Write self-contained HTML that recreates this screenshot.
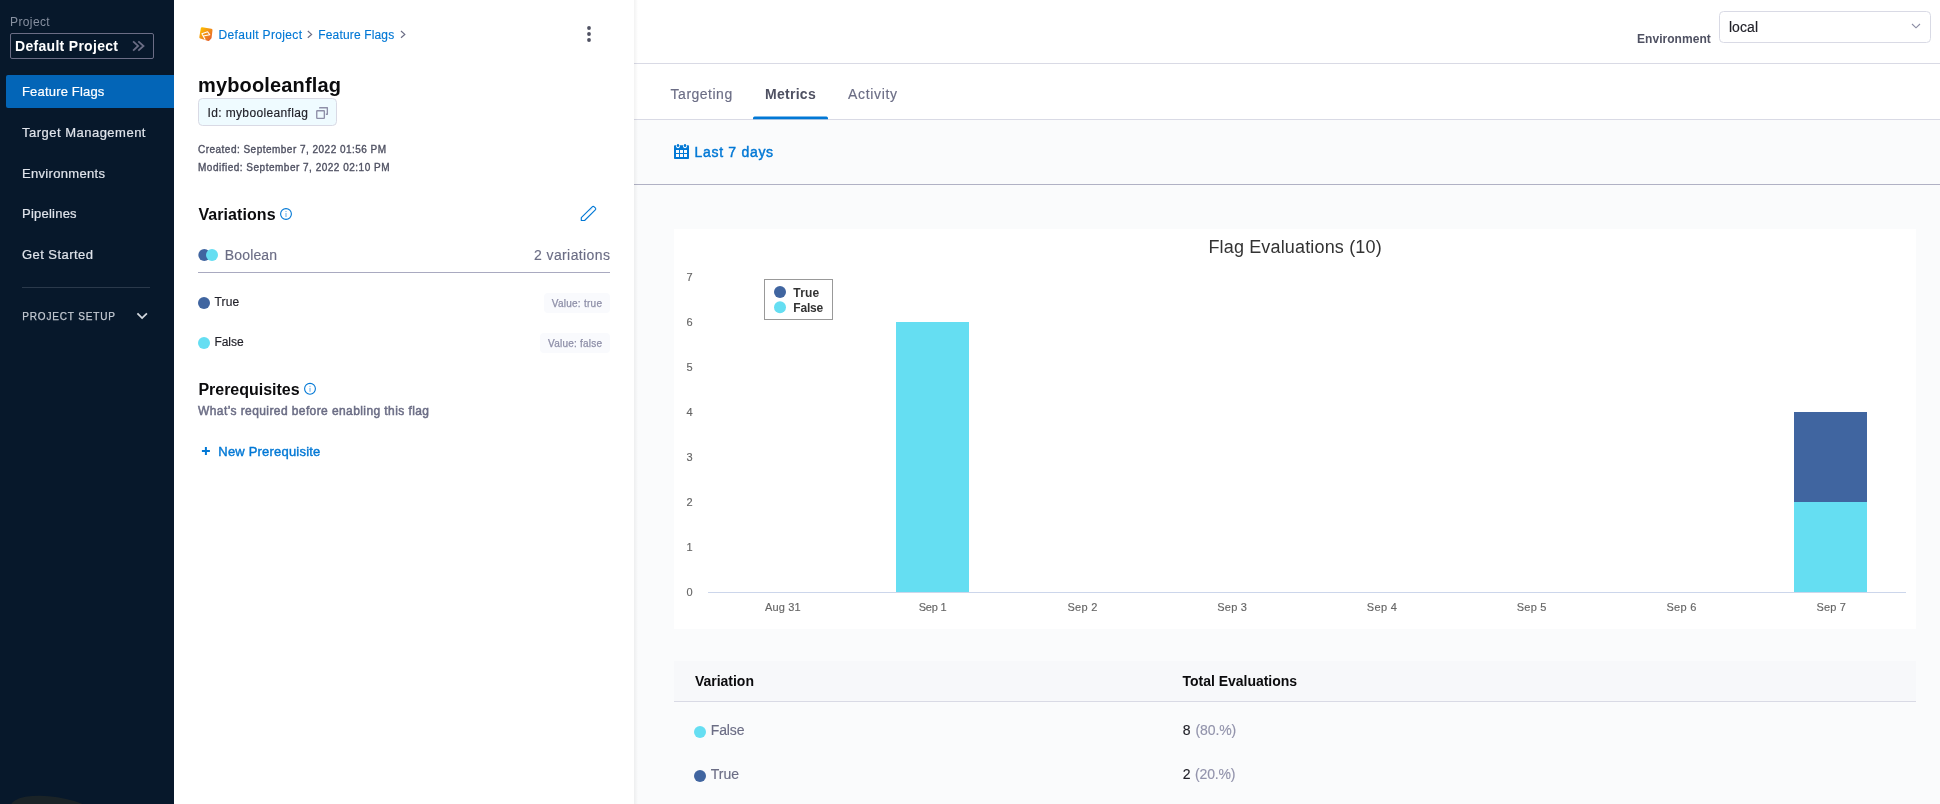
<!DOCTYPE html>
<html lang="en"><head><meta charset="utf-8"><title>mybooleanflag - Feature Flags</title>
<style>
*{box-sizing:border-box}
html,body{margin:0;padding:0}
body{width:1940px;height:804px;overflow:hidden;position:relative;background:#fafbfc;font-family:"Liberation Sans",sans-serif;}
.t{position:absolute;white-space:pre;margin:0}
.gl{position:absolute;left:0;top:0;width:1940px;height:804px;will-change:transform}
.abs{position:absolute}
#sidebar{left:0;top:0;width:174px;height:804px;background:#07182b;overflow:hidden}
#left{left:174px;top:0;width:460px;height:804px;background:#fff;}
#right{left:634px;top:0;width:1306px;height:804px;background:#fafbfc;overflow:hidden}
svg{position:absolute;overflow:visible}
</style></head>
<body>

<nav id="sidebar" class="abs">
  <div class="abs" style="left:10px;top:797px;width:90px;height:32px;border-radius:50%;background:#1a2327;transform:rotate(9deg)"></div>
  <div class="abs" style="left:10px;top:33px;width:144px;height:26px;border:1px solid #6b6d85;border-radius:2px"></div>
  <svg style="left:0;top:0" width="174" height="804"><path d="M133.1 41.4l5 4.55-5 4.65M138.3 41.4l5.2 4.55-5.2 4.65" fill="none" stroke="#6b6d85" stroke-width="1.8"/>
  <path d="M137.4 313.4l4.7 4.7 4.8-4.7" fill="none" stroke="#d3d8de" stroke-width="1.8"/></svg>
  <div class="abs" style="left:6px;top:75px;width:168px;height:33px;background:#0365b7;border-radius:2px 0 0 2px"></div>
  <div class="abs" style="left:22px;top:287px;width:128px;height:1px;background:#2a394b"></div>
  <div class="gl">
  <span class="t" style="left:10px;top:15px;font-size:12px;line-height:14px;color:#8790a0;letter-spacing:0.39px;">Project</span>
<span class="t" style="left:15px;top:38px;font-size:14px;line-height:17px;color:#ffffff;font-weight:700;letter-spacing:0.3px;">Default Project</span>
<span class="t" style="left:22px;top:84px;font-size:13px;line-height:16px;color:#ffffff;letter-spacing:0.18px;-webkit-text-stroke:0.2px #ffffff;">Feature Flags</span>
<span class="t" style="left:22px;top:125px;font-size:13px;line-height:16px;color:#dfe3ea;letter-spacing:0.49px;-webkit-text-stroke:0.2px #dfe3ea;">Target Management</span>
<span class="t" style="left:22px;top:166px;font-size:13px;line-height:16px;color:#dfe3ea;letter-spacing:0.32px;-webkit-text-stroke:0.2px #dfe3ea;">Environments</span>
<span class="t" style="left:22px;top:206px;font-size:13px;line-height:16px;color:#dfe3ea;letter-spacing:0.23px;-webkit-text-stroke:0.2px #dfe3ea;">Pipelines</span>
<span class="t" style="left:22px;top:247px;font-size:13px;line-height:16px;color:#dfe3ea;letter-spacing:0.45px;-webkit-text-stroke:0.2px #dfe3ea;">Get Started</span>
<span class="t" style="left:22.2px;top:311px;font-size:10px;line-height:12px;color:#c3c9d2;letter-spacing:0.84px;-webkit-text-stroke:0.25px #c3c9d2;">PROJECT SETUP</span>
  </div>
</nav>


<main id="right" class="abs">
  <div class="abs" style="left:0;top:0;width:1306px;height:64px;background:#fff;border-bottom:1px solid #d9dae5"></div>
  <div class="abs" style="left:0;top:64px;width:1306px;height:56px;background:#fff;border-bottom:1px solid #d9dae5"></div>
  <div class="abs" style="left:0;top:120px;width:1306px;height:65px;background:#fafbfc;border-bottom:1px solid #b0b1c4"></div>
  <div class="abs" style="left:0;top:0;width:4px;height:804px;background:linear-gradient(90deg,rgba(0,0,0,.05),rgba(0,0,0,0))"></div>
  <div class="abs" style="left:40px;top:229px;width:1242px;height:400px;background:#fff"></div>
  <div class="abs" style="left:40px;top:661px;width:1242px;height:41px;background:#f7f8fa;border-bottom:1px solid #d9dae5"></div>
</main>
<svg style="left:0;top:0" width="1940" height="804">
  <rect x="1719.5" y="11.5" width="211" height="31" rx="4" fill="#fff" stroke="#d9dae5"/>
  <path d="M1912 24l4 3.8 4-3.8" fill="none" stroke="#8b8ca3" stroke-width="1.1"/>
  <path d="M753 119.3v-1.1a1.6 1.6 0 0 1 1.6-1.6h71.8a1.6 1.6 0 0 1 1.6 1.6v1.1z" fill="#0278d5"/>
  <g><rect x="674" y="145.2" width="15" height="13.8" rx=".8" fill="#0278d5"/>
    <circle cx="678" cy="146.3" r="1.85" fill="#fafbfc"/><circle cx="685" cy="146.3" r="1.85" fill="#fafbfc"/>
    <rect x="677" y="143.9" width="2" height="3" rx=".7" fill="#0278d5"/><rect x="684" y="143.9" width="2" height="3" rx=".7" fill="#0278d5"/>
    <g fill="#fafbfc"><rect x="676" y="150" width="3" height="3"/><rect x="680" y="150" width="3" height="3"/><rect x="684" y="150" width="3" height="3"/><rect x="676" y="154" width="3" height="3"/><rect x="680" y="154" width="3" height="3"/><rect x="684" y="154" width="3" height="3"/></g></g>
  <rect x="708" y="592" width="1198" height="1" fill="#ccd6eb"/>
  <rect x="896" y="322" width="73" height="270" fill="#65def2"/><rect x="1794" y="412" width="73" height="90" fill="#4065a0"/><rect x="1794" y="502" width="73" height="90" fill="#65def2"/>
  <rect x="764.5" y="279.5" width="68" height="40" fill="#fff" stroke="#999"/>
  <circle cx="780" cy="292" r="6" fill="#4065a0"/><circle cx="780" cy="307.3" r="6" fill="#65def2"/>
  <circle cx="700" cy="732" r="6" fill="#65def2"/><circle cx="700" cy="775.9" r="6" fill="#4065a0"/>
</svg>
<div class="gl">
<span class="t" style="left:1637px;top:32px;font-size:12px;line-height:14px;color:#4f5162;font-weight:700;letter-spacing:0.04px;">Environment</span>
<span class="t" style="left:1728.9px;top:19px;font-size:14px;line-height:17px;color:#22222a;letter-spacing:0.08px;-webkit-text-stroke:0.15px #22222a;">local</span>
<span class="t" style="left:670.6px;top:86px;font-size:14px;line-height:17px;color:#6b6d85;letter-spacing:0.5px;-webkit-text-stroke:0.15px #6b6d85;">Targeting</span>
<span class="t" style="left:765px;top:86px;font-size:14px;line-height:17px;color:#4f5162;font-weight:700;letter-spacing:0.28px;">Metrics</span>
<span class="t" style="left:848.1px;top:86px;font-size:14px;line-height:17px;color:#6b6d85;letter-spacing:0.67px;-webkit-text-stroke:0.15px #6b6d85;">Activity</span>
<span class="t" style="left:694.5px;top:144px;font-size:14px;line-height:17px;color:#0278d5;letter-spacing:0.7px;-webkit-text-stroke:0.45px #0278d5;">Last 7 days</span>
<span class="t" style="left:1208.4px;top:236px;font-size:18px;line-height:22px;color:#333333;letter-spacing:0.16px;">Flag Evaluations (10)</span>
<span class="t" style="left:793.3px;top:286px;font-size:12px;line-height:14px;color:#333333;font-weight:700;letter-spacing:0.19px;">True</span>
<span class="t" style="left:793.3px;top:301px;font-size:12px;line-height:14px;color:#333333;font-weight:700;letter-spacing:-0.2px;">False</span>
<span class="t" style="left:686.4px;top:586px;font-size:11px;line-height:13px;color:#666666;-webkit-text-stroke:0.15px #666666;">0</span>
<span class="t" style="left:686.4px;top:541px;font-size:11px;line-height:13px;color:#666666;-webkit-text-stroke:0.15px #666666;">1</span>
<span class="t" style="left:686.4px;top:496px;font-size:11px;line-height:13px;color:#666666;-webkit-text-stroke:0.15px #666666;">2</span>
<span class="t" style="left:686.4px;top:451px;font-size:11px;line-height:13px;color:#666666;-webkit-text-stroke:0.15px #666666;">3</span>
<span class="t" style="left:686.4px;top:406px;font-size:11px;line-height:13px;color:#666666;-webkit-text-stroke:0.15px #666666;">4</span>
<span class="t" style="left:686.4px;top:361px;font-size:11px;line-height:13px;color:#666666;-webkit-text-stroke:0.15px #666666;">5</span>
<span class="t" style="left:686.4px;top:316px;font-size:11px;line-height:13px;color:#666666;-webkit-text-stroke:0.15px #666666;">6</span>
<span class="t" style="left:686.4px;top:271px;font-size:11px;line-height:13px;color:#666666;-webkit-text-stroke:0.15px #666666;">7</span>
<span class="t" style="left:765.1px;top:601px;font-size:11px;line-height:13px;color:#666666;letter-spacing:0.14px;-webkit-text-stroke:0.15px #666666;">Aug 31</span>
<span class="t" style="left:918.8px;top:601px;font-size:11px;line-height:13px;color:#666666;letter-spacing:-0.26px;-webkit-text-stroke:0.15px #666666;">Sep 1</span>
<span class="t" style="left:1067.5px;top:601px;font-size:11px;line-height:13px;color:#666666;letter-spacing:0.26px;-webkit-text-stroke:0.15px #666666;">Sep 2</span>
<span class="t" style="left:1217.2px;top:601px;font-size:11px;line-height:13px;color:#666666;letter-spacing:0.26px;-webkit-text-stroke:0.15px #666666;">Sep 3</span>
<span class="t" style="left:1366.8px;top:601px;font-size:11px;line-height:13px;color:#666666;letter-spacing:0.36px;-webkit-text-stroke:0.15px #666666;">Sep 4</span>
<span class="t" style="left:1516.7px;top:601px;font-size:11px;line-height:13px;color:#666666;letter-spacing:0.26px;-webkit-text-stroke:0.15px #666666;">Sep 5</span>
<span class="t" style="left:1666.4px;top:601px;font-size:11px;line-height:13px;color:#666666;letter-spacing:0.31px;-webkit-text-stroke:0.15px #666666;">Sep 6</span>
<span class="t" style="left:1816.4px;top:601px;font-size:11px;line-height:13px;color:#666666;letter-spacing:0.16px;-webkit-text-stroke:0.15px #666666;">Sep 7</span>
<span class="t" style="left:694.9px;top:673px;font-size:14px;line-height:17px;color:#0b0b0d;font-weight:700;letter-spacing:-0.01px;">Variation</span>
<span class="t" style="left:1182.5px;top:673px;font-size:14px;line-height:17px;color:#0b0b0d;font-weight:700;letter-spacing:-0.02px;">Total Evaluations</span>
<span class="t" style="left:710.8px;top:722px;font-size:14px;line-height:17px;color:#6b6d85;letter-spacing:-0.13px;-webkit-text-stroke:0.15px #6b6d85;">False</span>
<span class="t" style="left:1182.7px;top:722px;font-size:14px;line-height:17px;color:#22222a;-webkit-text-stroke:0.15px #22222a;">8</span>
<span class="t" style="left:1195.4px;top:722px;font-size:14px;line-height:17px;color:#9293ab;letter-spacing:-0.07px;-webkit-text-stroke:0.15px #9293ab;">(80.%)</span>
<span class="t" style="left:710.8px;top:766px;font-size:14px;line-height:17px;color:#6b6d85;letter-spacing:0.01px;-webkit-text-stroke:0.15px #6b6d85;">True</span>
<span class="t" style="left:1182.7px;top:766px;font-size:14px;line-height:17px;color:#22222a;-webkit-text-stroke:0.15px #22222a;">2</span>
<span class="t" style="left:1195px;top:766px;font-size:14px;line-height:17px;color:#9293ab;letter-spacing:-0.15px;-webkit-text-stroke:0.15px #9293ab;">(20.%)</span>
</div>


<section id="left" class="abs"></section>
<svg style="left:0;top:0" width="700" height="804">
  <defs><linearGradient id="og" x1="0" y1="0" x2="1" y2="1"><stop offset="0" stop-color="#fdbd00"/><stop offset="1" stop-color="#e5602f"/></linearGradient></defs>
  <g transform="translate(199,27)">
    <path d="M3.1 1.5L12.2 3L11.3 10.7L9.5 12.7L6.6 11.7L1.6 10.3Z" fill="url(#og)" stroke="url(#og)" stroke-width="2.6" stroke-linejoin="round"/>
    <path d="M6 12.3L2.9 6.7L8.6 4.7L10.8 7.8L4.2 9" fill="none" stroke="#fff" stroke-width="1.1" stroke-linejoin="round" stroke-linecap="round"/>
  </g>
  <path d="M307.8 31l3.8 3.4-3.8 3.4M401 31l3.8 3.4-3.8 3.4" fill="none" stroke="#6b6d85" stroke-width="1.2"/>
  <g fill="#4f5162"><circle cx="589" cy="28" r="1.9"/><circle cx="589" cy="34" r="1.9"/><circle cx="589" cy="40" r="1.9"/></g>
  <rect x="198.5" y="98.5" width="138" height="27" rx="4" fill="#effbff" stroke="#d9dae5"/>
  <g fill="none" stroke="#8e8fa8" stroke-width="1.35"><rect x="316.75" y="110.75" width="7.6" height="7.6" rx=".5"/><path d="M319.75 108.6v-.9h7.6v6.5h-1.5" stroke-linejoin="round"/></g>
  <g fill="none" stroke="#0278d5"><circle cx="286" cy="214" r="5.4" stroke-width="1.1"/><circle cx="310" cy="388.8" r="5.4" stroke-width="1.1"/></g>
  <g fill="#6db1ea"><rect x="285.45" y="213" width="1.1" height="4"/><rect x="285.45" y="211" width="1.1" height="1.1"/><rect x="309.45" y="387.8" width="1.1" height="4"/><rect x="309.45" y="385.8" width="1.1" height="1.1"/></g>
  <path d="M581.3 220.5v-2.9L592.2 206.8q1-1 2 0l1.1 1.1q1 1 0 2L584.6 220.5Z" fill="none" stroke="#0278d5" stroke-width="1.15" stroke-linejoin="round"/>
  <path d="M589.4 211.2l3.2-3.2" fill="none" stroke="#0278d5" stroke-opacity=".22" stroke-width="1"/>
  <circle cx="204.3" cy="255" r="6" fill="#4065a0"/><circle cx="212" cy="255" r="6" fill="#65def2"/>
  <rect x="198" y="272" width="412" height="1" fill="#a9aac0"/>
  <circle cx="204" cy="303" r="6" fill="#4065a0"/><circle cx="204" cy="343" r="6" fill="#65def2"/>
  <rect x="544" y="293" width="66" height="20" rx="4" fill="#f9fafd"/>
  <rect x="540" y="333" width="70" height="20" rx="4" fill="#f9fafd"/>
  <path d="M205.9 447v8M201.9 451h8" stroke="#0278d5" stroke-width="2"/>
</svg>
<div class="gl">
<span class="t" style="left:218.5px;top:28px;font-size:12px;line-height:14px;color:#0278d5;letter-spacing:0.34px;-webkit-text-stroke:0.15px #0278d5;">Default Project</span>
<span class="t" style="left:318.3px;top:28px;font-size:12px;line-height:14px;color:#0278d5;letter-spacing:0.15px;-webkit-text-stroke:0.15px #0278d5;">Feature Flags</span>
<span class="t" style="left:198px;top:73px;font-size:20px;line-height:24px;color:#0b0b0d;font-weight:700;letter-spacing:0.15px;">mybooleanflag</span>
<span class="t" style="left:207.6px;top:106px;font-size:12px;line-height:14px;color:#22222a;letter-spacing:0.35px;-webkit-text-stroke:0.15px #22222a;">Id: mybooleanflag</span>
<span class="t" style="left:198px;top:144px;font-size:10px;line-height:12px;color:#4f5162;letter-spacing:0.48px;-webkit-text-stroke:0.35px #4f5162;">Created: September 7, 2022 01:56 PM</span>
<span class="t" style="left:198px;top:162px;font-size:10px;line-height:12px;color:#4f5162;letter-spacing:0.5px;-webkit-text-stroke:0.35px #4f5162;">Modified: September 7, 2022 02:10 PM</span>
<span class="t" style="left:198.4px;top:205px;font-size:16px;line-height:19px;color:#0b0b0d;font-weight:700;letter-spacing:0.08px;">Variations</span>
<span class="t" style="left:224.8px;top:247px;font-size:14px;line-height:17px;color:#6b6d85;letter-spacing:0.15px;-webkit-text-stroke:0.15px #6b6d85;">Boolean</span>
<span class="t" style="left:534px;top:247px;font-size:14px;line-height:17px;color:#6b6d85;letter-spacing:0.4px;-webkit-text-stroke:0.15px #6b6d85;">2 variations</span>
<span class="t" style="left:214.4px;top:295px;font-size:12px;line-height:14px;color:#22222a;letter-spacing:0.22px;-webkit-text-stroke:0.15px #22222a;">True</span>
<span class="t" style="left:551.7px;top:298px;font-size:10px;line-height:12px;color:#8e8fa8;letter-spacing:0.27px;-webkit-text-stroke:0.25px #8e8fa8;">Value: true</span>
<span class="t" style="left:214.4px;top:335px;font-size:12px;line-height:14px;color:#22222a;letter-spacing:-0.04px;-webkit-text-stroke:0.15px #22222a;">False</span>
<span class="t" style="left:548px;top:338px;font-size:10px;line-height:12px;color:#8e8fa8;letter-spacing:0.23px;-webkit-text-stroke:0.25px #8e8fa8;">Value: false</span>
<span class="t" style="left:198.4px;top:380px;font-size:16px;line-height:19px;color:#0b0b0d;font-weight:700;letter-spacing:-0.02px;">Prerequisites</span>
<span class="t" style="left:198px;top:404px;font-size:12px;line-height:14px;color:#6b6d85;letter-spacing:0.41px;-webkit-text-stroke:0.5px #6b6d85;">What’s required before enabling this flag</span>
<span class="t" style="left:218.3px;top:444px;font-size:13px;line-height:16px;color:#0278d5;letter-spacing:0.2px;-webkit-text-stroke:0.4px #0278d5;">New Prerequisite</span>
</div>

</body></html>
